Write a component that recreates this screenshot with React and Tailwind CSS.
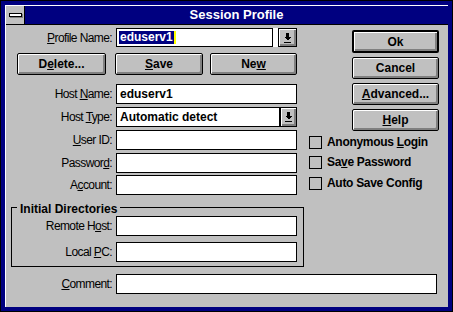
import React from "react";

const bevel = "shadow-[inset_1px_1px_0_#ffffff,inset_-2px_-2px_0_#808080]";

function Btn({ children, def, className = "" }) {
  return (
    <div
      className={`flex items-center justify-center rounded-[2px] border-black bg-[#c0c0c0] text-[12px] font-bold text-black ${bevel} ${def ? "border-2" : "border"} ${className}`}
    >
      {children}
    </div>
  );
}

function DropBtn({ className = "" }) {
  return (
    <div className={`flex h-full items-center justify-center border border-black bg-[#c0c0c0] ${bevel} ${className}`}>
      <svg width="7" height="10" viewBox="0 0 7 10" shapeRendering="crispEdges">
        <rect x="2" y="0" width="3" height="4" fill="#000" />
        <polygon points="0,4 7,4 3.5,7.5" fill="#000" />
        <rect x="0" y="9" width="7" height="1" fill="#000" />
      </svg>
    </div>
  );
}

function Label({ children, w = "w-[106px]" }) {
  return <div className={`${w} text-right text-[12px] tracking-[-0.6px] text-black`}>{children}</div>;
}

function Field({ value, w = "w-[181px]" }) {
  return (
    <div className={`ml-[4px] flex h-[20px] ${w} items-center border border-black bg-white pl-[3px] text-[12px] font-bold text-black`}>
      {value}
    </div>
  );
}

function Check({ children, className = "" }) {
  return (
    <div className={`ml-[5px] flex h-[20px] items-center ${className}`}>
      <div className="h-[13px] w-[13px] border border-black" />
      <span className="ml-[5px] text-[12px] font-bold tracking-[-0.3px] text-black">{children}</span>
    </div>
  );
}

export default function App() {
  return (
    <div className="h-[312px] w-[453px] border border-black bg-[#000080] p-[4px] font-['Liberation_Sans',Arial,sans-serif]">
      <div className="flex h-full flex-col border-l border-t border-white">
        {/* title bar */}
        <div className="flex h-[19px] border-b border-black">
          <div className="flex w-[19px] items-center justify-center border-r border-black bg-[#c0c0c0]">
            <div className="h-[4px] w-[13px] border border-black bg-white shadow-[1px_1px_0_#808080]" />
          </div>
          <div className="flex flex-1 items-center justify-center text-[13px] font-bold text-white">Session Profile</div>
        </div>

        <div className="flex flex-1 flex-col bg-[#c0c0c0]">
          <div className="flex">
            {/* left form */}
            <div className="flex w-[298px] flex-col">
              <div className="mt-[3px] flex h-[19px] items-center">
                <Label><u>P</u>rofile Name:</Label>
                <div className="ml-[4px] flex h-full w-[157px] items-center border border-black bg-white pl-[2px] text-[12px] font-bold">
                  <span className="inline-block h-[13px] bg-[#000080] px-[1px] leading-[13px] text-white">eduserv1</span>
                  <span className="inline-block h-[13px] w-[2px] bg-[#ffff00]" />
                </div>
                <div className="h-full w-[5px] bg-white" />
                <DropBtn className="w-[19px]" />
              </div>

              <div className="mt-[6px] flex h-[22px]">
                <Btn className="ml-[11px] w-[89px]">D<u>e</u>lete...</Btn>
                <Btn className="ml-[9px] w-[88px]"><u>S</u>ave</Btn>
                <Btn className="ml-[7px] w-[87px]">Ne<u>w</u></Btn>
              </div>

              <div className="mt-[9px] flex h-[20px] items-center">
                <Label>Host <u>N</u>ame:</Label>
                <Field value="eduserv1" />
              </div>
              <div className="mt-[3px] flex h-[20px] items-center">
                <Label>Host <u>T</u>ype:</Label>
                <Field value="Automatic detect" w="w-[164px]" />
                <DropBtn className="w-[17px]" />
              </div>
              <div className="mt-[3px] flex h-[20px] items-center">
                <Label><u>U</u>ser ID:</Label>
                <Field />
              </div>
              <div className="mt-[3px] flex h-[20px] items-center">
                <Label>Passwor<u>d</u>:</Label>
                <Field />
              </div>
              <div className="mt-[2px] flex h-[20px] items-center">
                <Label>A<u>c</u>count:</Label>
                <Field />
              </div>

              <div className="relative ml-[5px] mt-[12px] w-[293px] border border-black pb-[4px] pt-[8px]">
                <span className="absolute left-[5px] top-[-6px] bg-[#c0c0c0] px-[3px] text-[12px] font-bold leading-[14px] text-black">
                  Initial Directories
                </span>
                <div className="flex h-[20px] items-center">
                  <Label w="w-[100px]">Remote H<u>o</u>st:</Label>
                  <Field />
                </div>
                <div className="mt-[6px] flex h-[20px] items-center">
                  <Label w="w-[100px]">Local <u>P</u>C:</Label>
                  <Field />
                </div>
              </div>
            </div>

            {/* right column */}
            <div className="flex flex-col">
              <Btn def className="ml-[48px] mt-[5px] h-[23px] w-[87px]">Ok</Btn>
              <Btn className="ml-[48px] mt-[4px] h-[22px] w-[87px]">Cancel</Btn>
              <Btn className="ml-[48px] mt-[4px] h-[22px] w-[87px]"><u>A</u>dvanced...</Btn>
              <Btn className="ml-[48px] mt-[4px] h-[22px] w-[87px]"><u>H</u>elp</Btn>
              <Check className="mt-[1px]">Anonymous <u>L</u>ogin</Check>
              <Check>Sa<u>v</u>e Password</Check>
              <Check className="mt-[1px]">Auto Save Config</Check>
            </div>
          </div>

          <div className="mt-[7px] flex h-[20px] items-center">
            <Label><u>C</u>omment:</Label>
            <Field w="w-[321px]" />
          </div>
        </div>
      </div>
    </div>
  );
}
